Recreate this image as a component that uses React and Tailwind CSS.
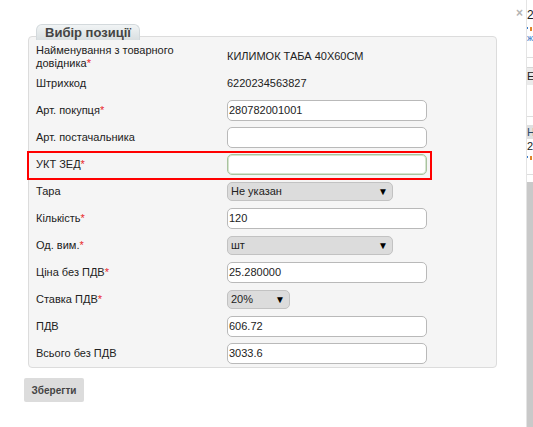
import React from "react";

const Req = () => <span className="text-[#e8262b]">*</span>;

const Field = ({ value = "", focused = false }) => (
  <div
    className={`w-[200px] h-[21px] bg-white rounded-[5px] border flex items-center pl-px ${
      focused ? "border-[#a9c39f] shadow-[inset_0_0_0_1px_#d5e4cf]" : "border-[#b9b9b9]"
    }`}
  >
    {value}
  </div>
);

const Select = ({ value, width }) => (
  <div
    className={`${width} h-[19px] bg-[#dcdcdc] rounded-[5px] border border-[#c2c2c2] flex items-center justify-between pl-[3px] pr-[4px]`}
  >
    <span>{value}</span>
    <span className="text-[10px] text-black">▼</span>
  </div>
);

const rows = [
  { label: <>Найменування з товарного довідника<Req /></>, value: <span>КИЛИМОК ТАБА 40Х60СМ</span> },
  { label: "Штрихкод", value: <span>6220234563827</span> },
  { label: <>Арт. покупця<Req /></>, value: <Field value="280782001001" /> },
  { label: "Арт. постачальника", value: <Field /> },
  { label: <>УКТ ЗЕД<Req /></>, value: <Field focused />, marked: true },
  { label: "Тара", value: <Select value="Не указан" width="w-[166px]" /> },
  { label: <>Кількість<Req /></>, value: <Field value="120" /> },
  { label: <>Од. вим.<Req /></>, value: <Select value="шт" width="w-[166px]" /> },
  { label: <>Ціна без ПДВ<Req /></>, value: <Field value="25.280000" /> },
  { label: <>Ставка ПДВ<Req /></>, value: <Select value="20%" width="w-[63px]" /> },
  { label: "ПДВ", value: <Field value="606.72" /> },
  { label: "Всього без ПДВ", value: <Field value="3033.6" /> },
];

export default function App() {
  return (
    <div className="w-[533px] h-[427px] bg-white overflow-hidden flex font-['Liberation_Sans',Arial,sans-serif] text-[11px] text-[#222]">
      <div className="relative w-[527px] h-full pl-[24px] pt-[24px] border-r border-[#e4e4e4]">
        <span className="absolute top-[4px] right-[3px] text-[12px] text-[#b4b4b4] font-bold">×</span>

        <div className="ml-[4px] w-[469px]">
          <div className="relative z-10 ml-[8px] w-[104px] h-[16px] rounded-t-[6px] border border-b-0 border-[#d3d9dc] bg-gradient-to-b from-[#f1f4f5] to-[#d9dfe1] flex items-center justify-center font-bold text-[13px] text-[#444]">
            Вибір позиції
          </div>
          <div className="-mt-[4px] h-[332px] bg-[#f5f5f5] border border-[#dcdcdc] rounded-[4px] pt-[6px] pl-[7px]">
            {rows.map((row, i) => (
              <div key={i} className="relative h-[27px] flex items-center">
                {row.marked && (
                  <div className="absolute -left-[9px] top-[-0.5px] w-[405px] h-[29px] border-2 border-[#f00]" />
                )}
                <div className="w-[191px] pr-[10px] leading-[13px]">{row.label}</div>
                <div className="flex items-center">{row.value}</div>
              </div>
            ))}
          </div>
        </div>

        <button className="mt-[10px] w-[60px] h-[24px] bg-[#dcdcdc] rounded-[2px] font-bold text-[10px] text-[#444]">
          Зберегти
        </button>
      </div>

      <div className="w-[6px] h-full flex flex-col overflow-hidden text-[12px] leading-none">
        <div className="h-[9px]" />
        <span className="text-[#222] whitespace-nowrap">2</span>
        <div className="mt-[6px] flex gap-[2px]">
          <span className="w-[1px] h-[2px] bg-[#3a7bc8]" />
          <span className="w-[2px] h-[4px] bg-[#e0862a]" />
        </div>
        <span className="mt-[3px] text-[#3a7bc8] text-[9px]">ж</span>
        <div className="mt-[14px] h-px bg-[#dedede]" />
        <div className="mt-[9px] h-[18px] bg-[#ebebeb] border-t border-[#d6d6d6] flex items-center text-[11px]">Е</div>
        <div className="mt-[31px] h-px bg-[#dedede]" />
        <div className="mt-[8px] h-[14px] bg-[#e0e0e0] flex items-center text-[11px] text-[#2a4a6a]">Н</div>
        <span className="mt-[2px] text-[11px]">2</span>
        <div className="mt-[4px] flex gap-[2px]">
          <span className="w-[1px] h-[2px] bg-[#3a7bc8]" />
          <span className="w-[2px] h-[4px] bg-[#e0862a]" />
        </div>
        <div className="mt-[14px] h-px bg-[#dedede]" />
        <div className="mt-[7px] flex-1 bg-[#c9c9c9]" />
      </div>
    </div>
  );
}
